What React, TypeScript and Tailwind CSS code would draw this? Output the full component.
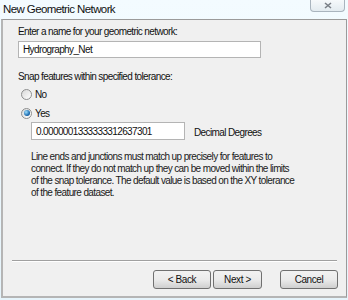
import React from "react";

const FONT = { fontFamily: '"Liberation Sans", Arial, sans-serif' };

function Radio({ checked, label }: { checked?: boolean; label: string }) {
  return (
    <div className="flex items-center gap-[3px] h-[12px]">
      <span className="relative w-[11px] h-[11px] rounded-full border border-[#8e8f8f] bg-gradient-to-br from-[#d9d9d9] to-[#ffffff] flex items-center justify-center">
        {checked && (
          <span className="w-[6px] h-[6px] rounded-full bg-[radial-gradient(circle_at_35%_35%,#9fe0ff,#1f6fb2_60%,#0c3f7a)]" />
        )}
      </span>
      <span>{label}</span>
    </div>
  );
}

function Button({ children, className = "" }: { children: React.ReactNode; className?: string }) {
  return (
    <button
      className={`h-[19px] rounded-[3px] border border-[#707070] bg-gradient-to-b from-[#f2f2f2] via-[#ebebeb] to-[#cfcfcf] text-[10px] text-[#111] tracking-[-0.4px] ${className}`}
    >
      {children}
    </button>
  );
}

export default function App() {
  return (
    <div
      className="w-[348px] h-[300px] bg-gradient-to-b from-[#f3fbff] to-[#e6f4fb] flex flex-col text-[10px] text-[#111] tracking-[-0.62px]"
      style={FONT}
    >
      {/* Title bar */}
      <div className="h-[19px] flex items-start justify-between">
        <span className="pl-[3px] pt-[1px] text-[11.5px] tracking-[-0.6px] text-[#111]">
          New Geometric Network
        </span>
        <div className="mr-[3px] w-[35px] h-[12px] rounded-b-[4px] border border-t-0 border-[#a9b4be] bg-gradient-to-b from-[#f6f9fb] to-[#e3ebf0] flex items-center justify-center">
          <svg width="8" height="7" viewBox="0 0 8 7">
            <path d="M1 1 L7 6 M7 1 L1 6" stroke="#7a7f86" strokeWidth="1.6" fill="none" />
          </svg>
        </div>
      </div>

      {/* Body */}
      <div className="mx-[1px] mb-[2px] flex-1 bg-[#f0f0f0] border border-[#9a9a9a] border-l-2 border-l-[#b5b5b5] border-b-2 border-b-[#b5b5b5] flex flex-col">
        <div className="pl-[15px] pt-[6px]">
          <div className="leading-[12px]">Enter a name for your geometric network:</div>
          <div className="mt-[3px] w-[243px] h-[17px] bg-white border border-[#b4b4b4] flex items-center pl-[4px]">
            Hydrography_Net
          </div>

          <div className="mt-[13px] leading-[12px]">Snap features within specified tolerance:</div>
          <div className="mt-[5px] pl-[3px] flex flex-col gap-[7px]">
            <Radio label="No" />
            <Radio checked label="Yes" />
          </div>

          <div className="mt-[3px] pl-[13px] flex items-center">
            <div className="w-[154px] h-[18px] bg-white border border-[#b4b4b4] flex items-center pl-[4px]">
              0.0000001333333312637301
            </div>
            <span className="ml-[9px] pt-[2px]">Decimal Degrees</span>
          </div>

          <p className="mt-[11px] pl-[13px] w-[280px] leading-[12px] text-[#1a1a1a]">
            Line ends and junctions must match up precisely for features to
            connect. If they do not match up they can be moved within the limits
            of the snap tolerance. The default value is based on the XY tolerance
            of the feature dataset.
          </p>
        </div>

        <div className="mt-auto mx-[9px] h-[2px] border-t border-[#a0a0a0] border-b border-b-white" />
        <div className="h-[34px] flex items-start pt-[8px] pr-[8px] justify-end">
          <Button className="w-[58px]">&lt; Back</Button>
          <Button className="ml-[2px] w-[49px]">Next &gt;</Button>
          <Button className="ml-[18px] w-[58px]">Cancel</Button>
        </div>
      </div>
    </div>
  );
}
